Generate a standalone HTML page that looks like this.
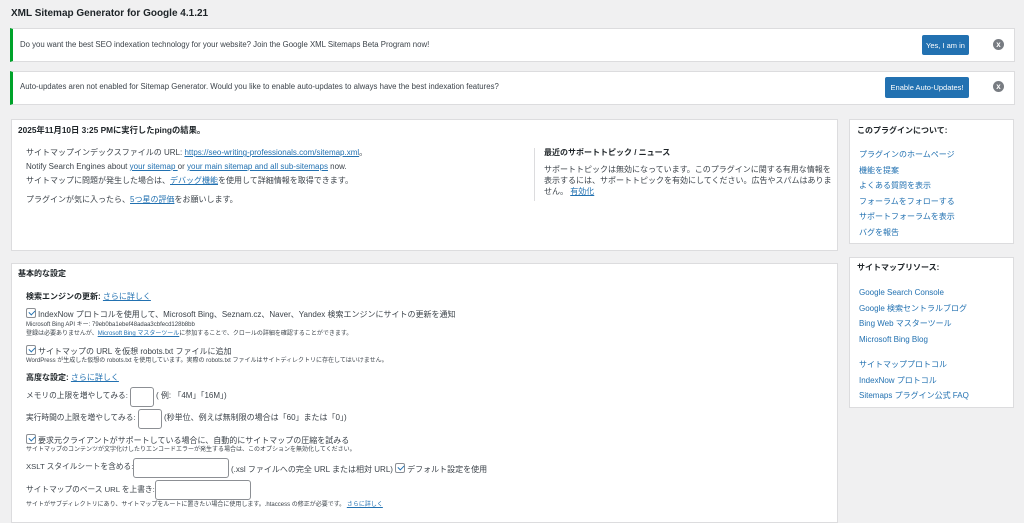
<!DOCTYPE html>
<html><head><meta charset="utf-8"><style>
*{margin:0;padding:0;box-sizing:border-box}
body{width:1024px;height:514px;overflow:hidden;background:#f0f0f1;font-family:"Liberation Sans","Noto Sans CJK JP",sans-serif;color:#3c434a;position:relative;font-size:8px}
.a{position:absolute;white-space:nowrap;line-height:1}
.box{position:absolute;background:#fff;border:1px solid #dcdcde}
a{color:#2271b1;text-decoration:underline}
.l{color:#2271b1}
b{font-weight:bold;color:#1d2327}
.btn{position:absolute;background:#2271b1;color:#fff;font-size:7.5px;display:flex;align-items:center;justify-content:center;border-radius:2px}
.x{position:absolute;width:11px;height:11px;border-radius:50%;background:#787c82;color:#fff;font-size:8px;font-weight:bold;display:flex;align-items:center;justify-content:center}
.cb{display:inline-block;width:10px;height:10px;border:1px solid #8c8f94;border-radius:2px;vertical-align:-1px;margin-right:2px;position:relative;background:#fff}
.cb:after{content:"";position:absolute;left:2.5px;top:0px;width:3px;height:5px;border:solid #2271b1;border-width:0 1.5px 1.5px 0;transform:rotate(45deg)}
.in{position:absolute;background:#fff;border:1px solid #8c8f94;border-radius:3px}
.s{font-size:6px}
</style></head><body>
<div class="a" style="left:11px;top:9px;font-size:10px;font-weight:bold;color:#1d2327">XML Sitemap Generator for Google 4.1.21</div>

<div class="box" style="left:10px;top:28px;width:1005px;height:34px;border-left:3px solid #00a32a"></div>
<div class="a" style="left:20px;top:41px;font-size:7.8px">Do you want the best SEO indexation technology for your website? Join the Google XML Sitemaps Beta Program now!</div>
<div class="btn" style="left:922px;top:35px;width:47px;height:20px">Yes, I am in</div>
<div class="x" style="left:993px;top:39px">x</div>

<div class="box" style="left:10px;top:71px;width:1005px;height:34px;border-left:3px solid #00a32a"></div>
<div class="a" style="left:20px;top:83px;font-size:7.8px">Auto-updates aren not enabled for Sitemap Generator. Would you like to enable auto-updates to always have the best indexation features?</div>
<div class="btn" style="left:885px;top:77px;width:84px;height:21px">Enable Auto-Updates!</div>
<div class="x" style="left:993px;top:81px">x</div>

<div class="box" style="left:11px;top:119px;width:827px;height:132px"></div>
<div class="a" style="left:18px;top:126px;font-weight:bold;color:#1d2327;font-size:8.3px">2025年11月10日 3:25 PMに実行したpingの結果。</div>
<div class="a" style="left:26px;top:149px">サイトマップインデックスファイルの URL: <a>https://seo-writing-professionals.com/sitemap.xml</a>。</div>
<div class="a" style="left:26px;top:163px">Notify Search Engines about <a>your sitemap </a> or <a>your main sitemap and all sub-sitemaps</a> now.</div>
<div class="a" style="left:26px;top:177px">サイトマップに問題が発生した場合は、<a>デバッグ機能</a>を使用して詳細情報を取得できます。</div>
<div class="a" style="left:26px;top:196px">プラグインが気に入ったら、<a>5つ星の評価</a>をお願いします。</div>
<div style="position:absolute;left:534px;top:148px;width:1px;height:53px;background:#dcdcde"></div>
<div class="a" style="left:544px;top:149px;font-weight:bold;color:#1d2327">最近のサポートトピック / ニュース</div>
<div class="a" style="left:544px;top:164px;line-height:11px">サポートトピックは無効になっています。このプラグインに関する有用な情報を<br>表示するには、サポートトピックを有効にしてください。広告やスパムはありま<br>せん。 <a>有効化</a></div>

<div class="box" style="left:11px;top:263px;width:827px;height:260px"></div>
<div class="a" style="left:18px;top:270px;font-weight:bold;color:#1d2327">基本的な設定</div>
<div class="a" style="left:26px;top:293px"><b>検索エンジンの更新:</b> <a>さらに詳しく</a></div>
<div class="a" style="left:26px;top:308px"><span class="cb"></span>IndexNow プロトコルを使用して、Microsoft Bing、Seznam.cz、Naver、Yandex 検索エンジンにサイトの更新を通知</div>
<div class="a s" style="left:26px;top:322px">Microsoft Bing API キー: 79eb0ba1ebef48adaa3cbfecd128b8bb</div>
<div class="a s" style="left:26px;top:331px">登録は必要ありませんが、<a>Microsoft Bing マスターツール</a>に参加することで、クロールの詳細を確認することができます。</div>
<div class="a" style="left:26px;top:345px"><span class="cb"></span>サイトマップの URL を仮想 robots.txt ファイルに追加</div>
<div class="a s" style="left:26px;top:358px">WordPress が生成した仮想の robots.txt を使用しています。実際の robots.txt ファイルはサイトディレクトリに存在してはいけません。</div>
<div class="a" style="left:26px;top:374px"><b>高度な設定:</b> <a>さらに詳しく</a></div>
<div class="a" style="left:26px;top:392px;font-size:7.7px">メモリの上限を増やしてみる:</div>
<div class="in" style="left:130px;top:387px;width:24px;height:20px"></div>
<div class="a" style="left:156px;top:392px">( 例: 「4M」「16M」)</div>
<div class="a" style="left:26px;top:414px;font-size:7.7px">実行時間の上限を増やしてみる:</div>
<div class="in" style="left:138px;top:409px;width:24px;height:20px"></div>
<div class="a" style="left:164px;top:414px">(秒単位、例えば無制限の場合は「60」または「0」)</div>
<div class="a" style="left:26px;top:434px"><span class="cb"></span>要求元クライアントがサポートしている場合に、自動的にサイトマップの圧縮を試みる</div>
<div class="a s" style="left:26px;top:447px">サイトマップのコンテンツが文字化けしたりエンコードエラーが発生する場合は、このオプションを無効化してください。</div>
<div class="a" style="left:26px;top:463px;font-size:7.7px">XSLT スタイルシートを含める:</div>
<div class="in" style="left:133px;top:458px;width:96px;height:20px"></div>
<div class="a" style="left:231px;top:463px">(.xsl ファイルへの完全 URL または相対 URL) <span class="cb"></span>デフォルト設定を使用</div>
<div class="a" style="left:26px;top:486px;font-size:7.7px">サイトマップのベース URL を上書き:</div>
<div class="in" style="left:155px;top:480px;width:96px;height:20px"></div>
<div class="a s" style="left:26px;top:502px">サイトがサブディレクトリにあり、サイトマップをルートに置きたい場合に使用します。.htaccess の修正が必要です。 <a>さらに詳しく</a></div>

<div class="box" style="left:849px;top:119px;width:165px;height:125px"></div>
<div class="a" style="left:857px;top:127px;font-weight:bold;color:#1d2327">このプラグインについて:</div>
<div class="a l" style="left:859px;top:147px;line-height:15.5px">プラグインのホームページ<br>機能を提案<br>よくある質問を表示<br>フォーラムをフォローする<br>サポートフォーラムを表示<br>バグを報告</div>

<div class="box" style="left:849px;top:257px;width:165px;height:151px"></div>
<div class="a" style="left:857px;top:264px;font-weight:bold;color:#1d2327">サイトマップリソース:</div>
<div class="a l" style="left:859px;top:285px;line-height:15.5px">Google Search Console<br>Google 検索セントラルブログ<br>Bing Web マスターツール<br>Microsoft Bing Blog</div>
<div class="a l" style="left:859px;top:357px;line-height:15.5px">サイトマッププロトコル<br>IndexNow プロトコル<br>Sitemaps プラグイン公式 FAQ</div>
</body></html>
